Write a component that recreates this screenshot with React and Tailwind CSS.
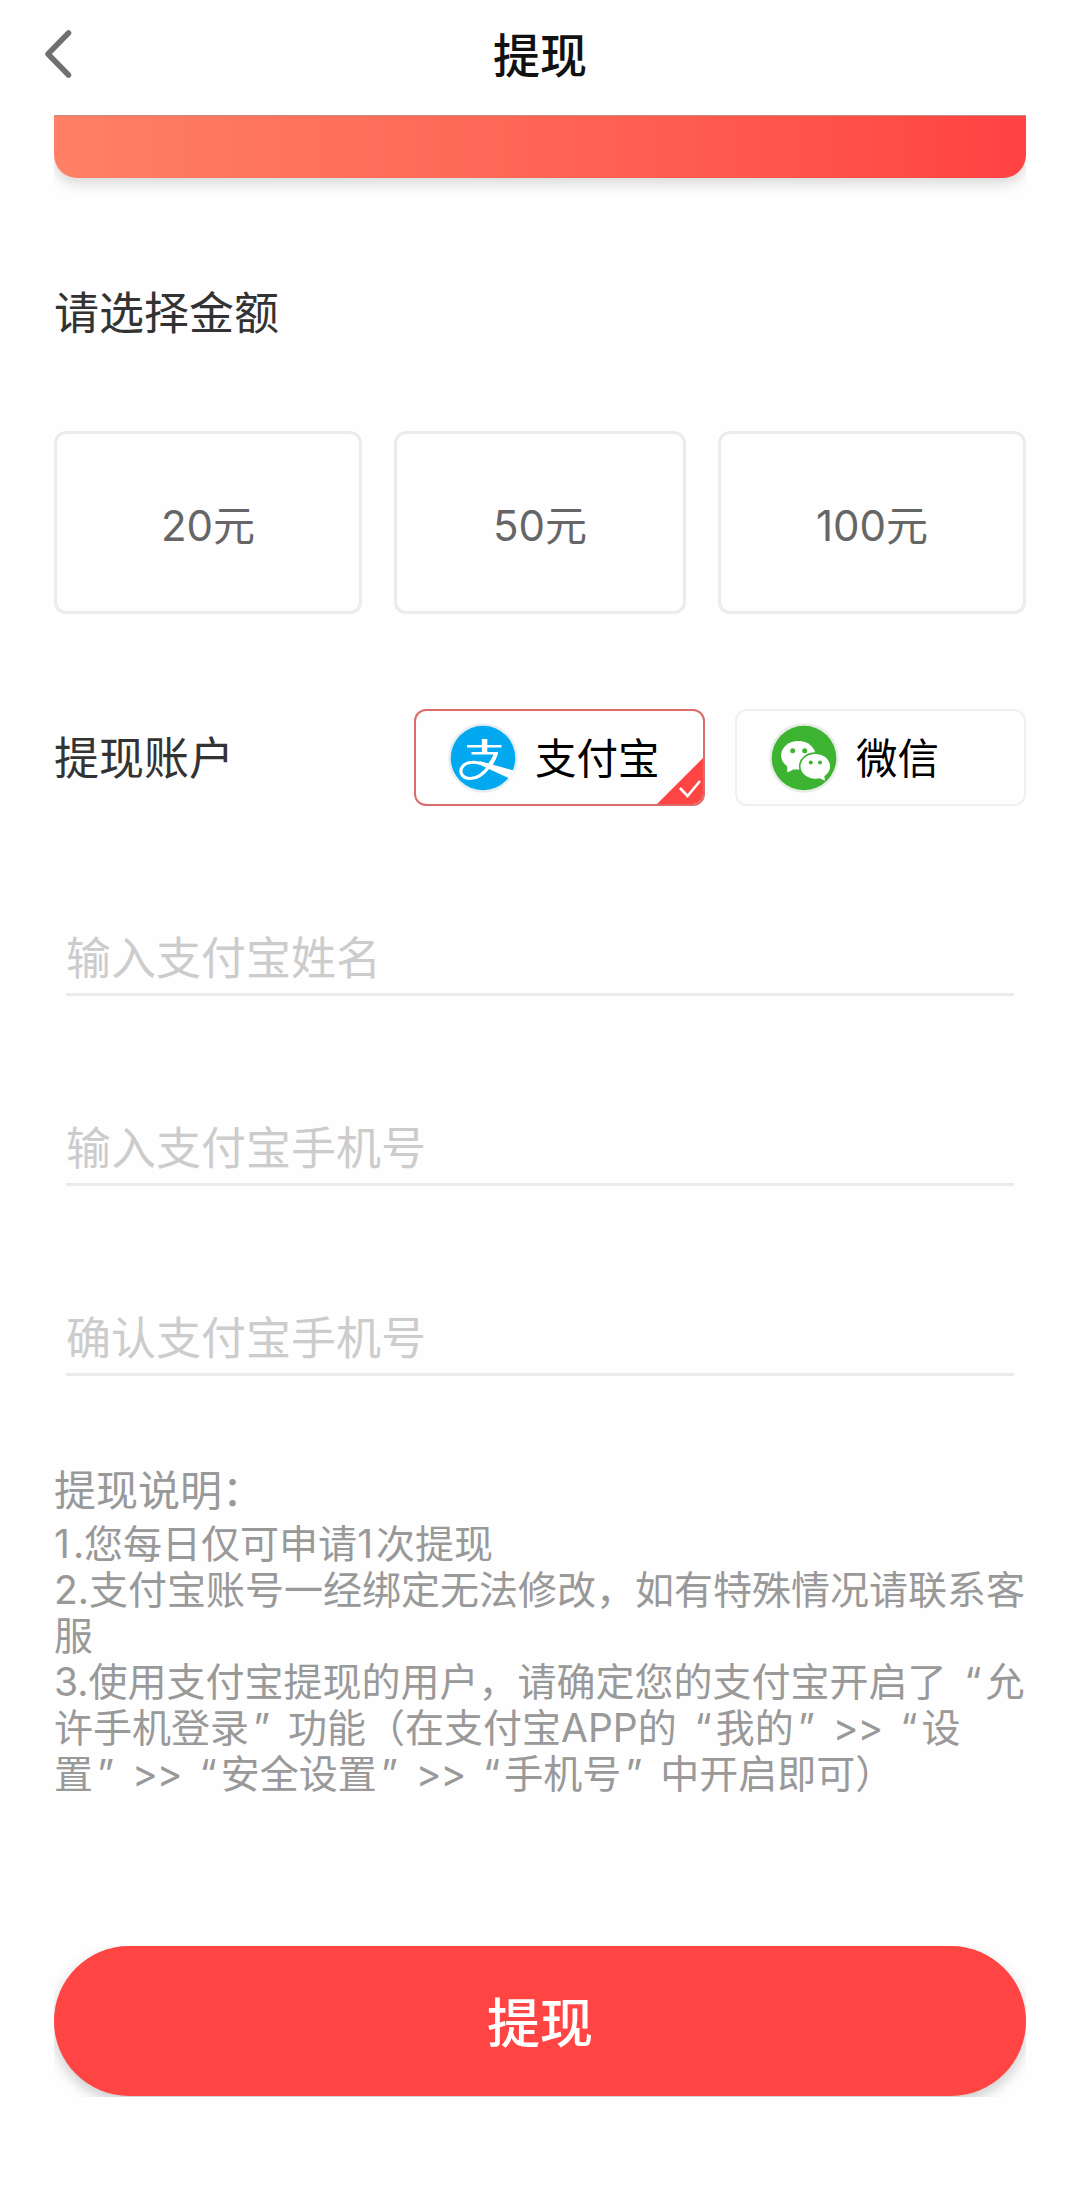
import { useState } from 'react';

const amounts = [
    { value: 20, width: 'w-[308px]' },
    { value: 50, width: 'w-[292px]' },
    { value: 100, width: 'w-[308px]' },
];

const fields = [
    { name: 'realname', placeholder: '输入支付宝姓名' },
    { name: 'phone', placeholder: '输入支付宝手机号' },
    { name: 'phone_confirm', placeholder: '确认支付宝手机号' },
];

const notes = [
    '1.您每日仅可申请1次提现',
    '2.支付宝账号一经绑定无法修改，如有特殊情况请联系客',
    '服',
    '3.使用支付宝提现的用户，请确定您的支付宝开启了“允',
    '许手机登录”功能（在支付宝APP的“我的”>>“设',
    '置”>>“安全设置”>>“手机号”中开启即可）',
];

// Quotes take a full character cell, the other marks only need their spacing adjusted
const markStyles = {
    '“': 'inline-block w-[39px] pr-[4px] text-right',
    '”': 'inline-block w-[39px] pl-[4px] text-left',
    '>>': 'tracking-[-1px]',
    '1': 'tracking-[3px]',
};

function AlipayIcon() {
    return (
        <svg viewBox="0 0 78 78" className="w-[78px] h-[78px] shrink-0" fill="none">
            <circle cx="39" cy="39" r="34.8" fill="#e6eef2" />
            <circle cx="39" cy="39" r="32.3" fill="#02a9f1" />
            <path d="M23 27.200H57.500M27.500 34.300H54" stroke="#fff" strokeWidth="2.6" />
            <path d="M40.600 20V34" stroke="#fff" strokeWidth="5.4" />
            <path d="M52 34.500C50.500 39 48.500 43 45.500 47C40 54.500 34 59.500 26.500 59.500C16.500 59.500 15 51.500 19 47C24 41.500 35 42.500 45 47" stroke="#fff" strokeWidth="3.2" />
            <path d="M50 34L54 34.500C52.500 39 50.500 43 48 47L42.500 46.500C46 42.500 48.500 39 50 34Z" fill="#fff" />
            <path d="M36 42.300L49 45.800L69.800 51.500C69 55 68 57.500 66.500 60L45 50L35 45.500Z" fill="#fff" />
        </svg>
    );
}

function WechatIcon() {
    return (
        <svg viewBox="0 0 78 78" className="w-[78px] h-[78px] shrink-0">
            <circle cx="39" cy="39" r="34.800" fill="#e8ebe8" />
            <circle cx="39" cy="39" r="32.300" fill="#3cb431" />
            <ellipse cx="33.300" cy="36.300" rx="17.200" ry="14.300" fill="#fff" />
            <path d="M22 46L22.500 53.500L31 49Z" fill="#fff" />
            <circle cx="27.700" cy="31.700" r="2.500" fill="#3cb431" />
            <circle cx="39.700" cy="31.700" r="2.500" fill="#3cb431" />
            <ellipse cx="50.300" cy="47.300" rx="15.600" ry="13.200" fill="#fff" stroke="#3cb431" strokeWidth="1.600" />
            <path d="M53 58.500L60 61.800L59 55Z" fill="#fff" />
            <circle cx="45.700" cy="43.400" r="2" fill="#3cb431" />
            <circle cx="55" cy="43.400" r="2" fill="#3cb431" />
        </svg>
    );
}

function NoteLine({ text }) {
    return (
        <div className="h-[46px] whitespace-nowrap">
            {text.split(/([“”1]|>>)/).map((part, i) => (
                markStyles[part] ? <span key={i} className={markStyles[part]}>{part}</span> : part
            ))}
        </div>
    );
}

export default function App() {
    const [account, setAccount] = useState('alipay');
    const [formData, setFormData] = useState({ realname: '', phone: '', phone_confirm: '' });

    const handleChange = (e) => {
        setFormData({ ...formData, [e.target.name]: e.target.value });
    };

    return (
        <div lang="zh-CN" className="w-[1080px] h-[2200px] overflow-hidden bg-[#fefefe] font-['Inter','Noto_Sans_CJK_SC',sans-serif] text-[#333]">
            <header className="grid h-[115px] grid-cols-[120px_1fr_120px] items-center bg-[#fefefe]">
                <button type="button" className="-mt-[8px] pl-[42px]">
                    <svg viewBox="0 0 32 54" className="w-8 h-[54px]" fill="none" stroke="#707070" strokeWidth="5.5" strokeLinecap="round" strokeLinejoin="round">
                        <path d="M26.500 6L6 27L26.500 48" />
                    </svg>
                </button>
                <h1 className="-mt-[4px] text-center text-[47px] leading-[60px] font-medium text-[#111]">提现</h1>
            </header>

            <main className="px-[54px]">
                <div className="h-[85px] overflow-hidden">
                    <div className="h-[63px] rounded-b-[23px] border-t border-[#c98a82] bg-linear-to-r from-[#ff8066] to-[#ff4242] shadow-[0_6px_14px_rgba(0,0,0,0.15)]" />
                </div>

                <h2 className="mt-[84px] text-[45px] leading-[60px]">请选择金额</h2>

                <div className="mt-[87px] flex justify-between">
                    {amounts.map((item) => (
                        <button
                            key={item.value}
                            type="button"
                            className={`${item.width} h-[183px] rounded-xl border-[3px] border-[#ebebeb] pt-[5px] text-[42px] text-[#666]`}
                        >
                            {item.value}元
                        </button>
                    ))}
                </div>

                <div className="mt-[95px] flex h-[97px] items-center">
                    <span className="w-[360px] pt-[3px] text-[45px] leading-[60px]">提现账户</span>
                    <button
                        type="button"
                        onClick={() => setAccount('alipay')}
                        className="relative flex h-[97px] w-[291px] items-center overflow-hidden rounded-xl border-2 border-[#de6a6a] pl-[28px] text-[41.500px] text-black"
                    >
                        <AlipayIcon />
                        <span className="ml-[13px] pt-1 whitespace-nowrap">支付宝</span>
                        {account === 'alipay' && (
                            <svg viewBox="0 0 48 48" className="absolute -right-[1px] -bottom-[1px] size-12" fill="none">
                                <path d="M48 0V48H0Z" fill="#ff4444" />
                                <path d="M24 31L31.500 39L44 24" stroke="#fff" strokeWidth="2.6" />
                            </svg>
                        )}
                    </button>
                    <button
                        type="button"
                        onClick={() => setAccount('wechat')}
                        className="ml-[30px] flex h-[97px] w-[291px] items-center rounded-xl border-2 border-[#f0f0f0] pl-[28px] text-[41.500px] text-black"
                    >
                        <WechatIcon />
                        <span className="ml-[13px] pt-1 whitespace-nowrap">微信</span>
                    </button>
                </div>

                <div className="mt-[122px] flex flex-col gap-[122px] px-3">
                    {fields.map((field) => (
                        <input
                            key={field.name}
                            name={field.name}
                            value={formData[field.name]}
                            onChange={handleChange}
                            placeholder={field.placeholder}
                            className="h-[68px] w-full border-b-[3px] border-[#ebebeb] pb-1 text-[45px] leading-[60px] placeholder:text-[#ccc] focus:outline-none"
                        />
                    ))}
                </div>

                <section className="mt-[85px] text-[#999]">
                    <h3 className="h-[60px] text-[42px] leading-[60px]">提现说明：</h3>
                    <div className="text-[39px] leading-[46px]">
                        {notes.map((line) => (
                            <NoteLine key={line} text={line} />
                        ))}
                    </div>
                </section>

                <div className="mt-[149px] h-[151px] overflow-hidden">
                    <button
                        type="button"
                        className="h-[150px] w-full rounded-[75px] bg-[#ff4444] pt-[8px] text-[53px] font-medium text-white shadow-[0_6px_14px_rgba(0,0,0,0.2)]"
                    >
                        提现
                    </button>
                </div>
            </main>
        </div>
    );
}
